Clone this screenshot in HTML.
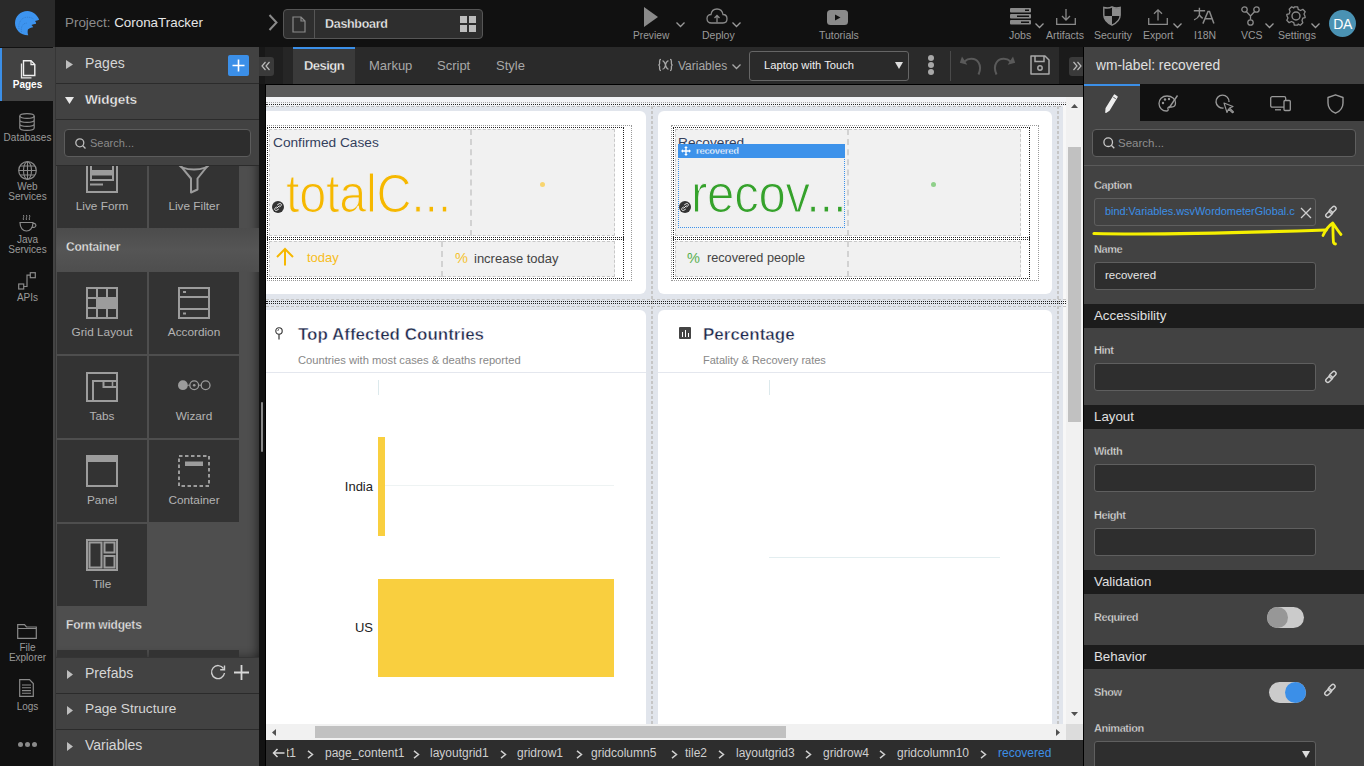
<!DOCTYPE html>
<html><head><meta charset="utf-8">
<style>
*{box-sizing:border-box;margin:0;padding:0}
html,body{width:1364px;height:766px;overflow:hidden;background:#111;font-family:"Liberation Sans",sans-serif}
.a{position:absolute}
.t{position:absolute;white-space:nowrap;line-height:1}
svg{position:absolute;overflow:visible}
</style></head><body>

<!-- ============ TOP BAR ============ -->
<div class="a" style="left:0;top:0;width:1364px;height:47px;background:#111"></div>
<div class="a" style="left:0;top:0;width:55px;height:47px;background:#2a2a2a"></div>
<!-- logo -->
<svg style="left:15px;top:10.7px" width="25" height="25" viewBox="0 0 25 25"><path d="M13.3 24.2 C6 24.5 0 19 0 12 C0 5.3 5.5 0 12.5 0 C17.8 0 22 3.5 24.2 8.7 C22.8 9.3 21.2 9.5 20 10 C20.8 10.8 21.2 11.7 21.1 12.7 C19.5 13 17.8 13.3 16.4 14 C17.2 14.6 17.8 15.3 18.2 16.2 C16.3 16.5 14.2 17.2 12.9 18.4 C12.5 20.5 12.5 22.5 13.3 24.2 Z" fill="#3d94ef"/><path d="M4 18 C3 12 6 6.5 12 6.2 C15 6.1 17.5 7 19 8.3 M6.5 21 C5.5 16 8 11.5 12.5 12.2" stroke="#2a6cb5" stroke-width="0.5" fill="none" stroke-dasharray="1 0.8"/></svg>
<div class="t" style="left:65px;top:16px;font-size:13.4px;color:#8c8c8c">Project: <span style="color:#e6e6e6">CoronaTracker</span></div>
<svg style="left:268px;top:14px" width="10" height="17" viewBox="0 0 10 17"><path d="M1.5 1 L8.5 8.5 L1.5 16" stroke="#8a8a8a" stroke-width="2" fill="none"/></svg>
<div class="a" style="left:283px;top:9px;width:200px;height:30px;background:#2e2e2e;border:1px solid #565656;border-radius:4px"></div>
<div class="a" style="left:314px;top:10px;width:1px;height:28px;background:#565656"></div>
<svg style="left:292px;top:16px" width="14" height="17" viewBox="0 0 14 17"><path d="M1 1 H9 L13 5 V16 H1 Z M9 1 V5 H13" stroke="#8a8a8a" stroke-width="1.2" fill="none"/></svg>
<div class="t" style="left:325px;top:18px;font-size:12.5px;font-weight:bold;color:#f4f4f4;letter-spacing:-0.3px;-webkit-text-stroke:0.3px #2e2e2e">Dashboard</div>
<div class="a" style="left:460px;top:16px;width:7px;height:7px;background:#bdbdbd"></div>
<div class="a" style="left:469px;top:16px;width:7px;height:7px;background:#bdbdbd"></div>
<div class="a" style="left:460px;top:25px;width:7px;height:7px;background:#bdbdbd"></div>
<div class="a" style="left:469px;top:25px;width:7px;height:7px;background:#bdbdbd"></div>

<!-- top toolbar icons -->
<svg style="left:643px;top:7px" width="16" height="20" viewBox="0 0 16 20"><path d="M1 0 L15 10 L1 20 Z" fill="#8a8a8a"/></svg>
<div class="t" style="left:633px;top:31px;font-size:10.2px;color:#9a9a9a">Preview</div>
<svg style="left:676px;top:22px" width="9" height="6" viewBox="0 0 9 6"><path d="M0.5 0.5 L4.5 4.5 L8.5 0.5" stroke="#9a9a9a" stroke-width="1.3" fill="none"/></svg>

<svg style="left:706px;top:8px" width="22" height="16" viewBox="0 0 22 16"><path d="M5.5 15 C2.5 15 1 13 1 10.5 C1 8 3 6.5 5 6.5 C5.5 3 8 1 11 1 C14.5 1 16.5 3.5 17 6.5 C19.5 6.5 21 8.5 21 10.8 C21 13 19.5 15 17 15 Z" stroke="#8a8a8a" stroke-width="1.3" fill="none"/><path d="M11 14.5 V7.5 M8.5 10 L11 7.5 L13.5 10" stroke="#8a8a8a" stroke-width="1.3" fill="none"/></svg>
<div class="t" style="left:702px;top:30px;font-size:10.5px;color:#9a9a9a">Deploy</div>
<svg style="left:732px;top:22px" width="9" height="6" viewBox="0 0 9 6"><path d="M0.5 0.5 L4.5 4.5 L8.5 0.5" stroke="#9a9a9a" stroke-width="1.3" fill="none"/></svg>

<svg style="left:827px;top:10px" width="21" height="15" viewBox="0 0 21 15"><rect x="0" y="0" width="21" height="15" rx="3.5" fill="#8a8a8a"/><path d="M8 4.5 L13.5 7.5 L8 10.5 Z" fill="#111"/></svg>
<div class="t" style="left:819px;top:30px;font-size:10.5px;color:#9a9a9a">Tutorials</div>

<svg style="left:1010px;top:8px" width="21" height="17" viewBox="0 0 21 17"><rect x="0" y="0" width="21" height="4.5" rx="1" fill="#8a8a8a"/><rect x="0" y="6" width="21" height="4.5" rx="1" fill="#8a8a8a"/><rect x="0" y="12" width="21" height="4.5" rx="1" fill="#8a8a8a"/><rect x="15" y="1.5" width="4" height="1.5" fill="#111"/><rect x="7" y="7.5" width="12" height="1.5" fill="#111"/><rect x="11" y="13.5" width="8" height="1.5" fill="#111"/></svg>
<div class="t" style="left:1009px;top:30px;font-size:10.5px;color:#9a9a9a">Jobs</div>
<svg style="left:1035px;top:23px" width="9" height="6" viewBox="0 0 9 6"><path d="M0.5 0.5 L4.5 4.5 L8.5 0.5" stroke="#9a9a9a" stroke-width="1.3" fill="none"/></svg>

<svg style="left:1056px;top:9px" width="20" height="16" viewBox="0 0 20 16"><path d="M0.7 9 V15.3 H19.3 V9" stroke="#8a8a8a" stroke-width="1.3" fill="none"/><path d="M10 0 V11 M6 7 L10 11 L14 7" stroke="#8a8a8a" stroke-width="1.3" fill="none"/></svg>
<div class="t" style="left:1046px;top:30px;font-size:10.5px;color:#9a9a9a">Artifacts</div>

<svg style="left:1103px;top:6px" width="18" height="20" viewBox="0 0 18 20"><path d="M9 0.8 C12 2.5 14.5 2.2 17.2 1.5 V9 C17.2 14 13.5 17 9 19.2 C4.5 17 0.8 14 0.8 9 V1.5 C3.5 2.2 6 2.5 9 0.8 Z" stroke="#8a8a8a" stroke-width="1.4" fill="#111"/><path d="M9 1 C12 2.5 14.5 2.5 17 2 V10 H9 Z M9 10 V19 C4.5 17 1 14 1 10 Z" fill="#8a8a8a"/></svg>
<div class="t" style="left:1094px;top:30px;font-size:10.5px;color:#9a9a9a">Security</div>

<svg style="left:1148px;top:9px" width="20" height="16" viewBox="0 0 20 16"><path d="M0.7 9 V15.3 H19.3 V9" stroke="#8a8a8a" stroke-width="1.3" fill="none"/><path d="M10 11.5 V0.8 M6 4.8 L10 0.8 L14 4.8" stroke="#8a8a8a" stroke-width="1.3" fill="none"/></svg>
<div class="t" style="left:1143px;top:30px;font-size:10.5px;color:#9a9a9a">Export</div>
<svg style="left:1173px;top:23px" width="9" height="6" viewBox="0 0 9 6"><path d="M0.5 0.5 L4.5 4.5 L8.5 0.5" stroke="#9a9a9a" stroke-width="1.3" fill="none"/></svg>

<svg style="left:1193px;top:7px" width="22" height="18" viewBox="0 0 22 18"><path d="M0.8 3.7 H12.1 M6.4 0.8 V8 C5.5 10 3.5 12 1.1 12.8 M6.4 8 C7.5 9.5 8.5 10.5 9.7 11.4" stroke="#8a8a8a" stroke-width="1.4" fill="none"/><path d="M9.9 16.6 L15 4.4 H16.5 L20.9 16.6 M12 11.7 H18.6" stroke="#8a8a8a" stroke-width="1.5" fill="none"/></svg>

<div class="t" style="left:1194px;top:30px;font-size:10.5px;color:#9a9a9a">I18N</div>

<svg style="left:1241px;top:6px" width="19" height="20" viewBox="0 0 19 20"><circle cx="3.5" cy="3.5" r="2.7" stroke="#8a8a8a" stroke-width="1.3" fill="none"/><circle cx="15.5" cy="3.5" r="2.7" stroke="#8a8a8a" stroke-width="1.3" fill="none"/><circle cx="9.5" cy="16.5" r="2.7" stroke="#8a8a8a" stroke-width="1.3" fill="none"/><path d="M5.3 5.5 L9.5 10 L13.7 5.5 M9.5 10 V13.8" stroke="#8a8a8a" stroke-width="1.3" fill="none"/></svg>
<div class="t" style="left:1241px;top:30px;font-size:10.5px;color:#9a9a9a">VCS</div>
<svg style="left:1265px;top:23px" width="9" height="6" viewBox="0 0 9 6"><path d="M0.5 0.5 L4.5 4.5 L8.5 0.5" stroke="#9a9a9a" stroke-width="1.3" fill="none"/></svg>

<svg style="left:1286px;top:6px" width="20" height="20" viewBox="0 0 20 20"><path d="M8.3 0.8 H11.7 L12.2 3.3 L14.5 4.5 L16.8 3.3 L19.2 5.7 L18 8 L18.9 10 L19.2 11.7 L16.8 12.2 L16 14.5 L16.8 16.8 L14.3 19.2 L12.2 18 L11.7 19.2 H8.3 L7.8 16.7 L5.5 15.5 L3.2 16.7 L0.8 14.3 L2 12 L1 10 L0.8 8.3 L3.2 7.8 L4 5.5 L3.2 3.2 L5.7 0.8 L7.8 2 Z" stroke="#8a8a8a" stroke-width="1.3" fill="none" stroke-linejoin="round"/><circle cx="10" cy="10" r="4" stroke="#8a8a8a" stroke-width="1.4" fill="none"/></svg>
<div class="t" style="left:1278px;top:30px;font-size:10.5px;color:#9a9a9a">Settings</div>
<svg style="left:1311px;top:23px" width="9" height="6" viewBox="0 0 9 6"><path d="M0.5 0.5 L4.5 4.5 L8.5 0.5" stroke="#9a9a9a" stroke-width="1.3" fill="none"/></svg>
<div class="a" style="left:1329px;top:10px;width:27px;height:27px;border-radius:50%;background:#4a92b3"></div>
<div class="t" style="left:1330px;top:17px;width:25px;text-align:center;font-size:14px;color:#fff;letter-spacing:-0.5px">DA</div>

<!-- ============ LEFT RAIL ============ -->
<div class="a" style="left:0;top:47px;width:53px;height:719px;background:#111"></div>
<div class="a" style="left:53px;top:47px;width:2px;height:719px;background:#444"></div><div class="a" style="left:55px;top:47px;width:1px;height:719px;background:#363636"></div>

<!-- active Pages -->
<div class="a" style="left:0;top:48px;width:55px;height:53px;background:#424242"></div>
<div class="a" style="left:0;top:48px;width:2px;height:53px;background:#3b8fe8"></div>
<svg style="left:19px;top:60px" width="17" height="19" viewBox="0 0 17 19"><path d="M2.5 3.5 V17.8 H12.5" stroke="#e8e8e8" stroke-width="1.3" fill="none"/><path d="M4.5 0.8 H12 L15.8 4.6 V15.5 H4.5 Z" stroke="#f0f0f0" stroke-width="1.4" fill="#424242"/><path d="M12 0.8 V4.6 H15.8" stroke="#f0f0f0" stroke-width="1.2" fill="none"/></svg>
<div class="t" style="left:0;top:80px;width:55px;text-align:center;font-size:10px;font-weight:bold;color:#fff">Pages</div>
<!-- Databases -->
<svg style="left:19px;top:113px" width="16" height="18" viewBox="0 0 16 18"><ellipse cx="8" cy="3" rx="7.2" ry="2.4" stroke="#8a8a8a" stroke-width="1.2" fill="none"/><path d="M0.8 3 V15 C0.8 16.5 4 17.4 8 17.4 C12 17.4 15.2 16.5 15.2 15 V3 M0.8 7 C0.8 8.5 4 9.4 8 9.4 C12 9.4 15.2 8.5 15.2 7 M0.8 11 C0.8 12.5 4 13.4 8 13.4 C12 13.4 15.2 12.5 15.2 11" stroke="#8a8a8a" stroke-width="1.2" fill="none"/></svg>
<div class="t" style="left:0;top:133px;width:55px;text-align:center;font-size:10px;color:#9a9a9a">Databases</div>
<!-- Web -->
<svg style="left:18px;top:161px" width="19" height="19" viewBox="0 0 19 19"><circle cx="9.5" cy="9.5" r="8.8" stroke="#8a8a8a" stroke-width="1.2" fill="none"/><ellipse cx="9.5" cy="9.5" rx="4" ry="8.8" stroke="#8a8a8a" stroke-width="1.1" fill="none"/><path d="M9.5 0.7 V18.3 M0.7 9.5 H18.3 M2 5 H17 M2 14 H17" stroke="#8a8a8a" stroke-width="1.1" fill="none"/></svg>
<div class="t" style="left:0;top:182px;width:55px;text-align:center;font-size:10px;color:#9a9a9a;line-height:10.3px;white-space:normal">Web<br>Services</div>
<!-- Java -->
<svg style="left:18px;top:214px" width="19" height="18" viewBox="0 0 19 18"><path d="M2 8.5 H15 C15 14 12 17 8.5 17 C5 17 2 14 2 8.5 Z" stroke="#8a8a8a" stroke-width="1.2" fill="none"/><path d="M15 9.5 C17.5 9 18.5 11 17.5 12.5 C16.7 13.5 15 13.5 14 13.2" stroke="#8a8a8a" stroke-width="1.2" fill="none"/><path d="M5.5 6 C4.5 4.5 6.5 3 5.5 1 M8.5 6 C7.5 4.5 9.5 3 8.5 1 M11.5 6 C10.5 4.5 12.5 3 11.5 1" stroke="#8a8a8a" stroke-width="1" fill="none"/></svg>
<div class="t" style="left:0;top:235px;width:55px;text-align:center;font-size:10px;color:#9a9a9a;line-height:10.3px;white-space:normal">Java<br>Services</div>
<!-- APIs -->
<svg style="left:18px;top:272px" width="18" height="18" viewBox="0 0 18 18"><rect x="0.7" y="12" width="5" height="5" stroke="#8a8a8a" stroke-width="1.2" fill="none"/><rect x="12.3" y="0.7" width="5" height="5" stroke="#8a8a8a" stroke-width="1.2" fill="none"/><path d="M5.7 14.5 H9 V3.2 H12.3" stroke="#8a8a8a" stroke-width="1.2" fill="none"/></svg>
<div class="t" style="left:0;top:293px;width:55px;text-align:center;font-size:10px;color:#9a9a9a">APIs</div>
<!-- File explorer -->
<svg style="left:17px;top:624px" width="20" height="15" viewBox="0 0 20 15"><path d="M0.7 0.7 H7.5 L9.5 3 H19.3 V14.3 H0.7 Z M0.7 4.5 H19.3" stroke="#8a8a8a" stroke-width="1.2" fill="none"/></svg>
<div class="t" style="left:0;top:643px;width:55px;text-align:center;font-size:10px;color:#9a9a9a;line-height:10.3px;white-space:normal">File<br>Explorer</div>
<!-- Logs -->
<svg style="left:19px;top:679px" width="15" height="18" viewBox="0 0 15 18"><path d="M0.7 0.7 H10.5 L14.3 4.5 V17.3 H0.7 Z" stroke="#8a8a8a" stroke-width="1.2" fill="none"/><path d="M3 6 H12 M3 8.8 H12 M3 11.6 H12 M3 14.2 H12" stroke="#8a8a8a" stroke-width="1.1" fill="none"/></svg>
<div class="t" style="left:0;top:702px;width:55px;text-align:center;font-size:10px;color:#9a9a9a">Logs</div>
<div class="a" style="left:18px;top:742px;width:5px;height:5px;border-radius:50%;background:#8a8a8a"></div>
<div class="a" style="left:25px;top:742px;width:5px;height:5px;border-radius:50%;background:#8a8a8a"></div>
<div class="a" style="left:32px;top:742px;width:5px;height:5px;border-radius:50%;background:#8a8a8a"></div>

<!-- ============ LEFT PANEL ============ -->
<div class="a" style="left:56px;top:47px;width:203px;height:719px;background:#424242"></div>
<div class="a" style="left:259px;top:47px;width:6px;height:719px;background:#121212"></div>
<div class="a" style="left:265px;top:84px;width:1px;height:682px;background:#000"></div>
<div class="a" style="left:261px;top:402px;width:2px;height:50px;background:#8a8a8a;border-radius:1px"></div>
<!-- Pages row -->
<div class="a" style="left:56px;top:83px;width:203px;height:1px;background:#2b2b2b"></div>
<svg style="left:66px;top:60px" width="7" height="9" viewBox="0 0 7 9"><path d="M0 0 L7 4.5 L0 9 Z" fill="#bdbdbd"/></svg>
<div class="t" style="left:85px;top:56px;font-size:14px;color:#d6d6d6">Pages</div>
<div class="a" style="left:228px;top:55px;width:21px;height:21px;background:#3b8fe8;border-radius:2px"></div>
<svg style="left:231px;top:58px" width="15" height="15" viewBox="0 0 15 15"><path d="M7.5 1.5 V13.5 M1.5 7.5 H13.5" stroke="#fff" stroke-width="1.6"/></svg>
<!-- Widgets row -->
<div class="a" style="left:56px;top:119px;width:203px;height:1px;background:#2b2b2b"></div>
<svg style="left:65px;top:97px" width="9" height="7" viewBox="0 0 9 7"><path d="M0 0 H9 L4.5 7 Z" fill="#e8e8e8"/></svg>
<div class="t" style="left:85px;top:92.5px;font-size:13.6px;font-weight:bold;color:#f4f4f4;letter-spacing:-0.1px;-webkit-text-stroke:0.35px #424242">Widgets</div>
<!-- search -->
<div class="a" style="left:64px;top:129px;width:187px;height:28px;background:#2d2d2d;border:1px solid #5c5c5c;border-radius:4px"></div>
<svg style="left:75px;top:138px" width="11" height="11" viewBox="0 0 11 11"><circle cx="4.8" cy="4.8" r="4" stroke="#bbb" stroke-width="1.3" fill="none"/><path d="M7.8 7.8 L10.5 10.5" stroke="#bbb" stroke-width="1.3"/></svg>
<div class="t" style="left:90px;top:138px;font-size:11px;color:#8a8a8a">Search...</div>
<div class="a" style="left:56px;top:165px;width:203px;height:1px;background:#2b2b2b"></div>
<!-- widgets scroll area -->
<div class="a" style="left:56px;top:166px;width:203px;height:491px;background:#4e4e4e;overflow:hidden">
  <div class="a" style="left:0;top:0;width:203px;height:491px;box-shadow:inset -10px 0 10px -8px rgba(0,0,0,.45), inset 0 -8px 8px -6px rgba(0,0,0,.3)"></div>
</div>
<div class="a" style="left:56px;top:166px;width:203px;height:491px;overflow:hidden">
<div class="a" style="left:1px;top:-20px;width:90px;height:82px;background:#333"></div>
<svg style="left:30px;top:-5px" width="32" height="32" viewBox="0 0 32 32"><rect x="1" y="1" width="30" height="30" stroke="#9c9c9c" stroke-width="2" fill="none"/><rect x="5" y="-6" width="22" height="25" stroke="#9c9c9c" stroke-width="2" fill="none"/><rect x="5" y="9" width="22" height="5.5" fill="#9c9c9c"/><path d="M4 23.5 H17" stroke="#9c9c9c" stroke-width="2"/></svg>
<div class="t" style="left:1px;top:35px;width:90px;text-align:center;font-size:11.8px;color:#b4b4b4">Live Form</div>
<div class="a" style="left:93px;top:-20px;width:90px;height:82px;background:#333"></div>
<svg style="left:122px;top:-5px" width="32" height="32" viewBox="0 0 32 32"><path d="M1 3 L13 17.5 V31.5 L19.5 28.5 V17.5 L31 3" stroke="#9c9c9c" stroke-width="2" fill="none" stroke-linejoin="round"/><ellipse cx="16" cy="3" rx="15" ry="5.5" stroke="#9c9c9c" stroke-width="2" fill="none"/></svg>
<div class="t" style="left:93px;top:35px;width:90px;text-align:center;font-size:11.8px;color:#b4b4b4">Live Filter</div>
<div class="a" style="left:0;top:62px;width:203px;height:44px;background:linear-gradient(180deg,#4c4c4c,#555 50%,#4e4e4e)"></div>
<div class="t" style="left:10px;top:75px;font-size:12px;font-weight:bold;color:#e6e6e6;letter-spacing:-0.2px;-webkit-text-stroke:0.3px #505050">Container</div>
<div class="a" style="left:1px;top:106px;width:90px;height:82px;background:#333"></div>
<svg style="left:30px;top:121px" width="32" height="32" viewBox="0 0 32 32"><rect x="1" y="1" width="30" height="30" stroke="#9c9c9c" stroke-width="2" fill="none"/><path d="M11 1 V31 M21 1 V31 M1 11 H31 M1 21 H31" stroke="#9c9c9c" stroke-width="2" fill="none"/><rect x="11" y="11" width="20" height="10" fill="#9c9c9c"/></svg>
<div class="t" style="left:1px;top:161px;width:90px;text-align:center;font-size:11.8px;color:#b4b4b4">Grid Layout</div>
<div class="a" style="left:93px;top:106px;width:90px;height:82px;background:#333"></div>
<svg style="left:122px;top:121px" width="32" height="32" viewBox="0 0 32 32"><rect x="1" y="1" width="30" height="30" stroke="#9c9c9c" stroke-width="2" fill="none"/><path d="M1 10 H31 M1 22 H31" stroke="#9c9c9c" stroke-width="2" fill="none"/><rect x="5" y="4" width="3" height="2" fill="#9c9c9c"/><rect x="5" y="25.5" width="3" height="2" fill="#9c9c9c"/></svg>
<div class="t" style="left:93px;top:161px;width:90px;text-align:center;font-size:11.8px;color:#b4b4b4">Accordion</div>
<div class="a" style="left:1px;top:190px;width:90px;height:82px;background:#333"></div>
<svg style="left:30px;top:205px" width="32" height="32" viewBox="0 0 32 32"><rect x="1" y="2" width="30" height="28" stroke="#9c9c9c" stroke-width="2" fill="none"/><path d="M7 30 V10 H31 M17.5 10 V16 H31" stroke="#9c9c9c" stroke-width="2" fill="none"/><path d="M26.5 10 V16" stroke="#9c9c9c" stroke-width="1.6"/></svg>
<div class="t" style="left:1px;top:245px;width:90px;text-align:center;font-size:11.8px;color:#b4b4b4">Tabs</div>
<div class="a" style="left:93px;top:190px;width:90px;height:82px;background:#333"></div>
<svg style="left:122px;top:205px" width="32" height="32" viewBox="0 0 32 32"><circle cx="4.9" cy="14.2" r="4.9" fill="#9c9c9c"/><circle cx="16.2" cy="14.2" r="4.4" stroke="#9c9c9c" stroke-width="1.3" fill="none"/><circle cx="16.2" cy="14.2" r="1.3" fill="#9c9c9c"/><circle cx="27.6" cy="14.2" r="4.4" stroke="#9c9c9c" stroke-width="1.3" fill="none"/><path d="M9.7 14.2 H11.8 M20.6 14.2 H23.2" stroke="#9c9c9c" stroke-width="1"/></svg>
<div class="t" style="left:93px;top:245px;width:90px;text-align:center;font-size:11.8px;color:#b4b4b4">Wizard</div>
<div class="a" style="left:1px;top:274px;width:90px;height:82px;background:#333"></div>
<svg style="left:30px;top:289px" width="32" height="32" viewBox="0 0 32 32"><rect x="1" y="1" width="30" height="30" stroke="#9c9c9c" stroke-width="2" fill="none"/><rect x="0" y="0" width="32" height="7" fill="#9c9c9c"/></svg>
<div class="t" style="left:1px;top:329px;width:90px;text-align:center;font-size:11.8px;color:#b4b4b4">Panel</div>
<div class="a" style="left:93px;top:274px;width:90px;height:82px;background:#333"></div>
<svg style="left:122px;top:289px" width="32" height="32" viewBox="0 0 32 32"><rect x="1" y="1" width="30" height="30" stroke="#9c9c9c" stroke-width="2" fill="none" stroke-dasharray="3.5 2.5"/><rect x="7" y="6.5" width="18" height="4.5" fill="#9c9c9c"/></svg>
<div class="t" style="left:93px;top:329px;width:90px;text-align:center;font-size:11.8px;color:#b4b4b4">Container</div>
<div class="a" style="left:1px;top:358px;width:90px;height:82px;background:#333"></div>
<svg style="left:30px;top:373px" width="32" height="32" viewBox="0 0 32 32"><rect x="1" y="1" width="30" height="30" stroke="#9c9c9c" stroke-width="2" fill="none"/><rect x="3.5" y="3.5" width="12" height="25" stroke="#9c9c9c" stroke-width="2" fill="none"/><rect x="18.5" y="3.5" width="10" height="10" stroke="#9c9c9c" stroke-width="2" fill="none"/><rect x="18.5" y="17" width="10" height="11.5" stroke="#9c9c9c" stroke-width="2" fill="none"/></svg>
<div class="t" style="left:1px;top:413px;width:90px;text-align:center;font-size:11.8px;color:#b4b4b4">Tile</div>
<div class="t" style="left:10px;top:453px;font-size:12px;font-weight:bold;color:#e6e6e6;letter-spacing:-0.2px;-webkit-text-stroke:0.3px #505050">Form widgets</div>
<div class="a" style="left:1px;top:484px;width:90px;height:10px;background:#333"></div><div class="a" style="left:93px;top:484px;width:90px;height:10px;background:#333"></div>
</div>

<!-- bottom rows -->
<div class="a" style="left:56px;top:657px;width:203px;height:109px;background:#424242;border-top:1px solid #353535"></div>
<div class="a" style="left:56px;top:693px;width:203px;height:1px;background:#2b2b2b"></div>
<div class="a" style="left:56px;top:729px;width:203px;height:1px;background:#2b2b2b"></div>
<svg style="left:67px;top:670px" width="6" height="9" viewBox="0 0 6 9"><path d="M0 0 L6 4.5 L0 9 Z" fill="#bdbdbd"/></svg>
<div class="t" style="left:85px;top:666px;font-size:14px;color:#d6d6d6">Prefabs</div>
<svg style="left:210px;top:665px" width="16" height="15" viewBox="0 0 16 15"><path d="M13.5 3.5 A6.5 6.5 0 1 0 14.5 8" stroke="#d0d0d0" stroke-width="1.4" fill="none"/><path d="M14.5 0.5 V4.8 H10.2" stroke="#d0d0d0" stroke-width="1.4" fill="none"/></svg>
<svg style="left:234px;top:665px" width="15" height="15" viewBox="0 0 15 15"><path d="M7.5 0 V15 M0 7.5 H15" stroke="#d8d8d8" stroke-width="1.8"/></svg>
<svg style="left:67px;top:706px" width="6" height="9" viewBox="0 0 6 9"><path d="M0 0 L6 4.5 L0 9 Z" fill="#bdbdbd"/></svg>
<div class="t" style="left:85px;top:702px;font-size:13.7px;color:#d6d6d6">Page Structure</div>
<svg style="left:67px;top:742px" width="6" height="9" viewBox="0 0 6 9"><path d="M0 0 L6 4.5 L0 9 Z" fill="#bdbdbd"/></svg>
<div class="t" style="left:85px;top:738px;font-size:14px;color:#d6d6d6">Variables</div>


<!-- ============ CANVAS TOOLBAR ============ -->
<div class="a" style="left:259px;top:47px;width:825px;height:37px;background:#2a2a2a"></div>
<div class="a" style="left:259px;top:47px;width:6px;height:37px;background:#181818"></div>
<div class="a" style="left:265px;top:47px;width:18px;height:37px;background:#1f1f1f"></div>
<div class="a" style="left:283px;top:47px;width:10px;height:37px;background:#262626"></div>
<div class="a" style="left:259px;top:57px;width:15px;height:19px;background:#3a3a3a;border-radius:0 3px 3px 0"></div>
<svg style="left:261px;top:61px" width="10" height="10" viewBox="0 0 10 10"><path d="M4.5 1 L1 5 L4.5 9 M8.5 1 L5 5 L8.5 9" stroke="#bbb" stroke-width="1.2" fill="none"/></svg>
<div class="a" style="left:293px;top:47px;width:62px;height:37px;background:#3a3a3a"></div>
<div class="a" style="left:293px;top:47px;width:62px;height:2px;background:#3b8fe8"></div>
<div class="t" style="left:304px;top:59px;font-size:13px;font-weight:bold;color:#f4f4f4;letter-spacing:-0.55px;-webkit-text-stroke:0.3px #3a3a3a">Design</div>
<div class="t" style="left:369px;top:59px;font-size:13px;color:#a8a8a8">Markup</div>
<div class="t" style="left:437px;top:59px;font-size:13px;color:#a8a8a8">Script</div>
<div class="t" style="left:496px;top:59px;font-size:13px;color:#a8a8a8">Style</div>
<svg style="left:658px;top:59px" width="15" height="12" viewBox="0 0 15 13" preserveAspectRatio="none"><path d="M3 0.5 C1.8 0.5 1.6 1.2 1.6 2.5 V4.8 C1.6 5.8 1.2 6.3 0.4 6.5 C1.2 6.7 1.6 7.2 1.6 8.2 V10.5 C1.6 11.8 1.8 12.5 3 12.5 M12 0.5 C13.2 0.5 13.4 1.2 13.4 2.5 V4.8 C13.4 5.8 13.8 6.3 14.6 6.5 C13.8 6.7 13.4 7.2 13.4 8.2 V10.5 C13.4 11.8 13.2 12.5 12 12.5" stroke="#a8a8a8" stroke-width="1.3" fill="none"/><path d="M4.5 2 C6 2 6.5 3 7.5 6.5 C8.5 10 9 11 10.5 11 M10.5 2 C9 2 8 4 7.5 6.5 C7 9 6 11 4.5 11" stroke="#a8a8a8" stroke-width="1.3" fill="none"/></svg>
<div class="t" style="left:678px;top:60px;font-size:12px;color:#a8a8a8">Variables</div>
<svg style="left:732px;top:64px" width="9" height="6" viewBox="0 0 9 6"><path d="M0.5 0.5 L4.5 4.5 L8.5 0.5" stroke="#a8a8a8" stroke-width="1.3" fill="none"/></svg>
<div class="a" style="left:749px;top:51px;width:160px;height:30px;background:#2a2a2a;border:1px solid #666;border-radius:3px"></div>
<div class="t" style="left:764px;top:60px;font-size:11.2px;color:#f0f0f0">Laptop with Touch</div>
<svg style="left:895px;top:62px" width="8" height="7" viewBox="0 0 8 7"><path d="M0 0 H8 L4 7 Z" fill="#ddd"/></svg>
<div class="a" style="left:928px;top:55px;width:6px;height:6px;border-radius:50%;background:#a8a8a8"></div>
<div class="a" style="left:928px;top:62px;width:6px;height:6px;border-radius:50%;background:#a8a8a8"></div>
<div class="a" style="left:928px;top:69px;width:6px;height:6px;border-radius:50%;background:#a8a8a8"></div>
<div class="a" style="left:950px;top:51px;width:1px;height:30px;background:#4a4a4a"></div>
<svg style="left:959px;top:56px" width="22" height="19" viewBox="0 0 22 19"><path d="M5.5 5.5 C9 2 16 1.5 19.5 6.5 C21.5 9.5 21.5 14 19.5 18.5" stroke="#5a5a5a" stroke-width="2" fill="none"/><path d="M0.8 6.8 L3 0.5 L8.3 8.8 Z" fill="#5a5a5a"/></svg>
<svg style="left:994px;top:56px" width="22" height="19" viewBox="0 0 22 19"><path d="M16.5 5.5 C13 2 6 1.5 2.5 6.5 C0.5 9.5 0.5 14 2.5 18.5" stroke="#5a5a5a" stroke-width="2" fill="none"/><path d="M21.2 6.8 L19 0.5 L13.7 8.8 Z" fill="#5a5a5a"/></svg>
<svg style="left:1030px;top:55px" width="20" height="20" viewBox="0 0 20 20"><path d="M1 1 H15 L19 5 V19 H1 Z" stroke="#a8a8a8" stroke-width="1.5" fill="none" stroke-linejoin="round"/><path d="M5 1 V6.5 H14 V1" stroke="#a8a8a8" stroke-width="1.5" fill="none"/><circle cx="10" cy="13" r="2.2" stroke="#a8a8a8" stroke-width="1.5" fill="none"/></svg>
<div class="a" style="left:1059px;top:47px;width:25px;height:37px;background:#1b1b1b"></div>
<div class="a" style="left:1069px;top:57px;width:15px;height:19px;background:#3a3a3a;border-radius:3px 0 0 3px"></div>
<svg style="left:1072px;top:61px" width="10" height="10" viewBox="0 0 10 10"><path d="M1.5 1 L5 5 L1.5 9 M5.5 1 L9 5 L5.5 9" stroke="#bbb" stroke-width="1.2" fill="none"/></svg>
<div class="a" style="left:266px;top:84px;width:818px;height:1px;background:#000"></div>


<!-- ============ CANVAS ============ -->
<div class="a" style="left:266px;top:85px;width:817px;height:655px;overflow:hidden;background:#f3f4f7">
 <div class="a" style="left:0;top:0;width:817px;height:12px;background:#5a5a5a"></div>
 <!-- layout grid columns bg -->
 <div class="a" style="left:0;top:21px;width:797px;height:640px;background:#e1e5ec"></div>
 <div class="a" style="left:0;top:17px;width:800px;height:0;border-top:1px dotted #aaa"></div>
 <div class="a" style="left:0;top:19px;width:800px;height:0;border-top:1px dotted #222"></div>
 <div class="a" style="left:0;top:21px;width:800px;height:0;border-top:1px dashed #bbb"></div>
 <div class="a" style="left:797px;top:21px;width:3px;height:640px;background:#f7f7f7"></div>
 <!-- column dashed lines -->
 <div class="a" style="left:385px;top:21px;width:2px;height:640px;background:repeating-linear-gradient(180deg,#c6c6c6 0 3px,transparent 3px 5px)"></div>
 <div class="a" style="left:791px;top:21px;width:2px;height:640px;background:repeating-linear-gradient(180deg,#c6c6c6 0 3px,transparent 3px 5px)"></div>

 <!-- row separator -->
 <div class="a" style="left:0;top:214px;width:800px;height:0;border-top:1px dashed #c4c4c4"></div>
 <div class="a" style="left:0;top:216px;width:800px;height:0;border-top:1px dotted #222"></div>
 <div class="a" style="left:0;top:218px;width:800px;height:0;border-top:1px dotted #222"></div>
 <div class="a" style="left:0;top:221px;width:800px;height:0;border-top:1px dashed #c4c4c4"></div>
 <!-- CARD 1 -->
 <div class="a" style="left:-10px;top:26px;width:390px;height:183px;background:#fff;border-radius:6px"></div>
 <div class="a" style="left:-10px;top:40px;width:376px;height:156px;border:1px dotted #999"></div>
 <div class="a" style="left:1px;top:42px;width:357px;height:152px;border:1px dotted #222"></div>
 <div class="a" style="left:1px;top:152px;width:357px;height:0;border-top:1px dotted #222"></div><div class="a" style="left:1px;top:154px;width:357px;height:0;border-top:1px dotted #222"></div>
 <div class="a" style="left:3px;top:44px;width:346px;height:107px;background:#f1f1f1;border:1px dashed #c8c8c8"></div>
 <div class="a" style="left:204px;top:44px;width:0;height:107px;border-left:2px dashed #d2d2d2"></div>
 <div class="a" style="left:3px;top:156px;width:346px;height:36px;background:#f1f1f1;border:1px dashed #c8c8c8"></div>
 <div class="a" style="left:175px;top:156px;width:0;height:36px;border-left:2px dashed #d2d2d2"></div>
 <div class="t" style="left:7px;top:51px;font-size:13.7px;color:#34405c">Confirmed Cases</div>
 <div class="t" style="left:19.7px;top:80.5px;font-size:54px;color:#f6b800;transform:scaleX(0.9);transform-origin:0 0;letter-spacing:-0.3px;-webkit-text-stroke:1.2px #f1f1f1;paint-order:normal">totalC...</div>
 <div class="a" style="left:6px;top:116px;width:12px;height:12px;border-radius:50%;background:#333"></div>
 <svg style="left:8px;top:118px" width="8" height="8" viewBox="0 0 8 8"><path d="M3.2 2 L5 0.8 C5.8 0.3 6.8 0.5 7.2 1.2 C7.6 1.9 7.3 2.7 6.7 3.1 L5.2 4.1 M4.8 6 L3 7.2 C2.2 7.7 1.2 7.5 0.8 6.8 C0.4 6.1 0.7 5.3 1.3 4.9 L2.8 3.9 M2.5 5.5 L5.5 2.5" stroke="#fff" stroke-width="0.9" fill="none"/></svg>
 <div class="a" style="left:274px;top:97px;width:5px;height:5px;border-radius:50%;background:#f8d570"></div>
 <svg style="left:10px;top:163px" width="18" height="18" viewBox="0 0 18 18"><path d="M9 17.5 V1.5 M1 9 L9 1 L17 9" stroke="#f6b800" stroke-width="2" fill="none"/></svg>
 <div class="t" style="left:41px;top:166px;font-size:13px;color:#f7bd1c">today</div>
 <div class="t" style="left:189px;top:165.5px;font-size:14.5px;color:#f6b800;-webkit-text-stroke:0.15px #f1f1f1">%</div>
 <div class="t" style="left:208px;top:167px;font-size:13px;color:#444">increase today</div>

 <!-- CARD 2 -->
 <div class="a" style="left:392px;top:26px;width:394px;height:183px;background:#fff;border-radius:6px"></div>
 <div class="a" style="left:405px;top:40px;width:368px;height:156px;border:1px dotted #999"></div>
 <div class="a" style="left:407px;top:42px;width:357px;height:152px;border:1px dotted #222"></div>
 <div class="a" style="left:407px;top:152px;width:357px;height:0;border-top:1px dotted #222"></div><div class="a" style="left:407px;top:154px;width:357px;height:0;border-top:1px dotted #222"></div>
 <div class="a" style="left:409px;top:44px;width:346px;height:107px;background:#f1f1f1;border:1px dashed #c8c8c8"></div>
 <div class="a" style="left:581px;top:44px;width:0;height:107px;border-left:2px dashed #d2d2d2"></div>
 <div class="a" style="left:409px;top:156px;width:346px;height:36px;background:#f1f1f1;border:1px dashed #c8c8c8"></div>
 <div class="a" style="left:581px;top:156px;width:0;height:36px;border-left:2px dashed #d2d2d2"></div>
 <div class="a" style="left:409px;top:45px;width:200px;height:14px;overflow:hidden"><div class="t" style="left:3px;top:6px;font-size:13.7px;color:#34405c">Recovered</div></div>
 <div class="t" style="left:425px;top:80.5px;font-size:54px;color:#35a22b;transform:scaleX(0.91);transform-origin:0 0;letter-spacing:-0.3px;-webkit-text-stroke:1.2px #f1f1f1">recov...</div>
 <div class="a" style="left:412px;top:59px;width:167px;height:84px;border:1px dotted #3d92ea"></div>
 <div class="a" style="left:412px;top:59px;width:167px;height:14px;background:#3d92ea"></div>
 <svg style="left:415px;top:61px" width="10" height="10" viewBox="0 0 10 10"><path d="M5 0 L6.8 2 H5.7 V4.3 H8 V3.2 L10 5 L8 6.8 V5.7 H5.7 V8 H6.8 L5 10 L3.2 8 H4.3 V5.7 H2 V6.8 L0 5 L2 3.2 V4.3 H4.3 V2 H3.2 Z" fill="#fff"/></svg>
 <div class="t" style="left:430px;top:61px;font-size:9.5px;font-weight:bold;color:#fff;letter-spacing:-0.3px;-webkit-text-stroke:0.3px #3d92ea">recovered</div>
 <div class="a" style="left:412.5px;top:116px;width:12px;height:12px;border-radius:50%;background:#333"></div>
 <svg style="left:414.5px;top:118px" width="8" height="8" viewBox="0 0 8 8"><path d="M3.2 2 L5 0.8 C5.8 0.3 6.8 0.5 7.2 1.2 C7.6 1.9 7.3 2.7 6.7 3.1 L5.2 4.1 M4.8 6 L3 7.2 C2.2 7.7 1.2 7.5 0.8 6.8 C0.4 6.1 0.7 5.3 1.3 4.9 L2.8 3.9 M2.5 5.5 L5.5 2.5" stroke="#fff" stroke-width="0.9" fill="none"/></svg>
 <div class="a" style="left:665px;top:97px;width:5px;height:5px;border-radius:50%;background:#8fd08a"></div>
 <div class="t" style="left:421px;top:165.5px;font-size:14.5px;color:#35a22b;-webkit-text-stroke:0.15px #f1f1f1">%</div>
 <div class="t" style="left:441px;top:167px;font-size:12.7px;color:#444">recovered people</div>

 <!-- CARD 3 -->
 <div class="a" style="left:-10px;top:225px;width:390px;height:460px;background:#fff;border-radius:6px"></div>
 <svg style="left:9px;top:242px" width="8" height="13" viewBox="0 0 8 13"><circle cx="4" cy="4" r="3.2" stroke="#333" stroke-width="1.1" fill="none"/><path d="M4 7.2 V12.5" stroke="#333" stroke-width="1.2"/><path d="M2.8 3.8 A1.3 1.3 0 0 1 4 2.5" stroke="#333" stroke-width="0.9" fill="none"/></svg>
 <div class="t" style="left:32px;top:241px;font-size:17px;font-weight:bold;color:#1f2a4d;letter-spacing:0px;-webkit-text-stroke:0.45px #fff">Top Affected Countries</div>
 <div class="t" style="left:32px;top:270px;font-size:11.2px;color:#888">Countries with most cases &amp; deaths reported</div>
 <div class="a" style="left:-10px;top:287px;width:390px;height:1px;background:#e4e7ee"></div>
 <div class="a" style="left:112px;top:295px;width:1px;height:15px;background:#dce9ec"></div>
 <div class="a" style="left:119px;top:400px;width:229px;height:1px;background:#eef3f3"></div>
 <div class="a" style="left:112px;top:352px;width:7px;height:99px;background:#f9cf3f"></div>
 <div class="t" style="left:47px;top:395px;width:60px;text-align:right;font-size:13px;color:#222">India</div>
 <div class="a" style="left:112px;top:494px;width:236px;height:98px;background:#f9cf3f"></div>
 <div class="t" style="left:47px;top:536px;width:60px;text-align:right;font-size:13px;color:#222">US</div>

 <!-- CARD 4 -->
 <div class="a" style="left:392px;top:225px;width:394px;height:460px;background:#fff;border-radius:6px"></div>
 <div class="a" style="left:413px;top:242px;width:12px;height:12px;background:#444;border-radius:1px"></div>
 <div class="a" style="left:415.5px;top:247px;width:1.5px;height:5px;background:#fff"></div>
 <div class="a" style="left:418.5px;top:245px;width:1.5px;height:7px;background:#fff"></div>
 <div class="a" style="left:421.5px;top:248px;width:1.5px;height:4px;background:#fff"></div>
 <div class="t" style="left:437px;top:241px;font-size:17px;font-weight:bold;color:#1f2a4d;letter-spacing:0px;-webkit-text-stroke:0.45px #fff">Percentage</div>
 <div class="t" style="left:437px;top:270px;font-size:11px;color:#888">Fatality &amp; Recovery rates</div>
 <div class="a" style="left:392px;top:287px;width:394px;height:1px;background:#e4e7ee"></div>
 <div class="a" style="left:503px;top:295px;width:1px;height:15px;background:#dce9ec"></div>
 <div class="a" style="left:503px;top:472px;width:231px;height:1px;background:#e3eef0"></div>

 <!-- scrollbars -->
 <div class="a" style="left:800px;top:12px;width:17px;height:627px;background:#f1f1f1"></div>
 <svg style="left:805px;top:19px" width="7" height="4" viewBox="0 0 7 4"><path d="M0 4 L3.5 0 L7 4 Z" fill="#505050"/></svg>
 <div class="a" style="left:802px;top:62px;width:13px;height:275px;background:#c1c1c1"></div>
 <svg style="left:805px;top:627px" width="7" height="4" viewBox="0 0 7 4"><path d="M0 0 L3.5 4 L7 0 Z" fill="#505050"/></svg>
 <div class="a" style="left:0;top:639px;width:800px;height:16px;background:#f1f1f1"></div>
 <svg style="left:6px;top:644px" width="4" height="7" viewBox="0 0 4 7"><path d="M4 0 L0 3.5 L4 7 Z" fill="#505050"/></svg>
 <div class="a" style="left:49px;top:641px;width:471px;height:12px;background:#c1c1c1"></div>
 <svg style="left:790px;top:644px" width="4" height="7" viewBox="0 0 4 7"><path d="M0 0 L4 3.5 L0 7 Z" fill="#505050"/></svg>
 <div class="a" style="left:800px;top:639px;width:17px;height:16px;background:#dcdcdc"></div>
</div>
<div class="a" style="left:1083px;top:47px;width:1px;height:719px;background:#000"></div>

<!-- breadcrumb -->
<div class="a" style="left:266px;top:740px;width:817px;height:26px;background:#2d2d2d"></div>
<svg style="left:272px;top:748px" width="13" height="10" viewBox="0 0 13 10"><path d="M12.5 5 H1.5 M5.5 1 L1.5 5 L5.5 9" stroke="#d8d8d8" stroke-width="1.5" fill="none"/></svg>
<div class="a" style="left:287px;top:744px;width:9px;height:18px;overflow:hidden"><div class="t" style="right:0;top:3px;font-size:12px;color:#cfcfcf">t1</div></div>
<svg style="left:307px;top:750px" width="7" height="9" viewBox="0 0 7 9"><path d="M1 0.8 L5.5 4.5 L1 8.2" stroke="#cfcfcf" stroke-width="1.5" fill="none"/></svg>
<svg style="left:413px;top:750px" width="7" height="9" viewBox="0 0 7 9"><path d="M1 0.8 L5.5 4.5 L1 8.2" stroke="#cfcfcf" stroke-width="1.5" fill="none"/></svg>
<svg style="left:500px;top:750px" width="7" height="9" viewBox="0 0 7 9"><path d="M1 0.8 L5.5 4.5 L1 8.2" stroke="#cfcfcf" stroke-width="1.5" fill="none"/></svg>
<svg style="left:576px;top:750px" width="7" height="9" viewBox="0 0 7 9"><path d="M1 0.8 L5.5 4.5 L1 8.2" stroke="#cfcfcf" stroke-width="1.5" fill="none"/></svg>
<svg style="left:671px;top:750px" width="7" height="9" viewBox="0 0 7 9"><path d="M1 0.8 L5.5 4.5 L1 8.2" stroke="#cfcfcf" stroke-width="1.5" fill="none"/></svg>
<svg style="left:718px;top:750px" width="7" height="9" viewBox="0 0 7 9"><path d="M1 0.8 L5.5 4.5 L1 8.2" stroke="#cfcfcf" stroke-width="1.5" fill="none"/></svg>
<svg style="left:805px;top:750px" width="7" height="9" viewBox="0 0 7 9"><path d="M1 0.8 L5.5 4.5 L1 8.2" stroke="#cfcfcf" stroke-width="1.5" fill="none"/></svg>
<svg style="left:879px;top:750px" width="7" height="9" viewBox="0 0 7 9"><path d="M1 0.8 L5.5 4.5 L1 8.2" stroke="#cfcfcf" stroke-width="1.5" fill="none"/></svg>
<svg style="left:980px;top:750px" width="7" height="9" viewBox="0 0 7 9"><path d="M1 0.8 L5.5 4.5 L1 8.2" stroke="#cfcfcf" stroke-width="1.5" fill="none"/></svg>
<div class="t" style="left:325px;top:747px;font-size:12px;color:#cfcfcf">page_content1</div>
<div class="t" style="left:430px;top:747px;font-size:12px;color:#cfcfcf">layoutgrid1</div>
<div class="t" style="left:517px;top:747px;font-size:12px;color:#cfcfcf">gridrow1</div>
<div class="t" style="left:591px;top:747px;font-size:12px;color:#cfcfcf">gridcolumn5</div>
<div class="t" style="left:685px;top:747px;font-size:12px;color:#cfcfcf">tile2</div>
<div class="t" style="left:736px;top:747px;font-size:12px;color:#cfcfcf">layoutgrid3</div>
<div class="t" style="left:823px;top:747px;font-size:12px;color:#cfcfcf">gridrow4</div>
<div class="t" style="left:897px;top:747px;font-size:12px;color:#cfcfcf">gridcolumn10</div>
<div class="t" style="left:998px;top:747px;font-size:12px;color:#3d8fe6">recovered</div>

<!-- ============ RIGHT PANEL ============ -->
<div class="a" style="left:1084px;top:47px;width:280px;height:719px;background:#424242"></div>
<div class="t" style="left:1096px;top:59px;font-size:13.8px;color:#e0e0e0">wm-label: recovered</div>
<div class="a" style="left:1084px;top:84px;width:280px;height:37px;background:#111"></div>
<div class="a" style="left:1084px;top:84px;width:56px;height:37px;background:#424242"></div>
<div class="a" style="left:1084px;top:84px;width:56px;height:2px;background:#3b8fe8"></div>
<svg style="left:1105px;top:94px" width="13" height="19" viewBox="0 0 13 19"><path d="M9.5 1.2 L12 2.8 L4 16 L1 18.2 L1.3 14.5 Z" stroke="#eee" stroke-width="1.6" fill="#eee" stroke-linejoin="round"/><path d="M8.3 3.2 L10.8 4.8" stroke="#444" stroke-width="0.9"/></svg>
<svg style="left:1158px;top:95px" width="20" height="17" viewBox="0 0 20 17"><path d="M9 1 C4 1 1 4.5 1 8.5 C1 13 4.5 16 8.5 16 C10 16 10.5 15 10 14 C9.5 13 10 12 11.5 12 H13.5 C16 12 17.5 10.5 17.5 8 C17.5 4 14 1 9 1 Z" stroke="#999" stroke-width="1.3" fill="none"/><circle cx="5" cy="8" r="1.2" fill="#999"/><circle cx="7" cy="4.5" r="1.2" fill="#999"/><circle cx="11" cy="4" r="1.2" fill="#999"/><path d="M19.5 0.5 L11 13" stroke="#999" stroke-width="1.4"/></svg>
<svg style="left:1215px;top:94px" width="19" height="19" viewBox="0 0 19 19"><path d="M8.5 14 A6.5 6.5 0 1 1 14 8" stroke="#999" stroke-width="1.4" fill="none"/><path d="M9 9 L18 12.5 L14.5 14 L18.5 18 L17.5 18.8 L13.5 15 L12 18.5 Z" stroke="#999" stroke-width="1.1" fill="#111" stroke-linejoin="round"/></svg>
<svg style="left:1270px;top:96px" width="21" height="15" viewBox="0 0 21 15"><rect x="0.7" y="0.7" width="15" height="10.5" rx="1.5" stroke="#999" stroke-width="1.3" fill="none"/><path d="M5 13.8 H11" stroke="#999" stroke-width="1.3"/><rect x="14" y="4.5" width="6.3" height="10" rx="1" stroke="#999" stroke-width="1.3" fill="#111"/></svg>
<svg style="left:1327px;top:94px" width="17" height="20" viewBox="0 0 17 20"><path d="M8.5 0.8 L16 3.5 V9 C16 14 12.5 17.5 8.5 19.2 C4.5 17.5 1 14 1 9 V3.5 Z" stroke="#999" stroke-width="1.4" fill="none" stroke-linejoin="round"/></svg>

<div class="a" style="left:1092px;top:129px;width:264px;height:28px;background:#2e2e2e;border:1px solid #5f5f5f;border-radius:4px"></div>
<svg style="left:1103px;top:137px" width="12" height="12" viewBox="0 0 12 12"><circle cx="5.2" cy="5.2" r="4.3" stroke="#c8c8c8" stroke-width="1.3" fill="none"/><path d="M8.3 8.3 L11.3 11.3" stroke="#c8c8c8" stroke-width="1.3"/></svg>
<div class="t" style="left:1118px;top:138px;font-size:11.5px;color:#8e8e8e">Search...</div>
<div class="a" style="left:1084px;top:165px;width:280px;height:1px;background:#5a5a5a"></div>

<div class="t" style="left:1094px;top:180px;font-size:11px;font-weight:bold;color:#dadada;letter-spacing:-0.45px;-webkit-text-stroke:0.3px #424242">Caption</div>
<div class="a" style="left:1094px;top:198px;width:222px;height:28px;background:#424242;border:1px solid #5f5f5f;border-radius:3px"></div>
<div class="a" style="left:1105px;top:203px;width:190px;height:18px;overflow:hidden"><div class="t" style="left:0;top:3px;font-size:10.9px;color:#3b8fe6">bind:Variables.wsvWordometerGlobal.cases</div></div>
<svg style="left:1300px;top:207px" width="12" height="12" viewBox="0 0 12 12"><path d="M1 1 L11 11 M11 1 L1 11" stroke="#d0d0d0" stroke-width="1.3"/></svg>
<svg style="left:1324px;top:205px" width="14" height="14" viewBox="-1.9 -1.9 17.8 17.8"><g transform="rotate(-45 7 7)"><rect x="-1.5" y="4.6" width="9.8" height="5.2" rx="2.6" stroke="#cfcfcf" stroke-width="1.8" fill="none"/><rect x="5.7" y="3.9" width="9.8" height="5.2" rx="2.6" stroke="#cfcfcf" stroke-width="1.8" fill="none"/></g></svg>

<svg style="left:1090px;top:218px" width="260" height="30" viewBox="0 0 260 30"><path d="M4 15.5 C60 17 130 15.5 236 12" stroke="#f5f000" stroke-width="3.2" fill="none" stroke-linecap="round"/><path d="M233 17.5 C235 13 238.5 8 242.8 5 C245 8 248 13 251 16.5 M242.8 6 C243 12 243 20 243.5 24.5 C244 25.5 245 26 245.5 26" stroke="#f5f000" stroke-width="2.8" fill="none" stroke-linecap="round" stroke-linejoin="round"/></svg>

<div class="t" style="left:1094px;top:244px;font-size:11px;font-weight:bold;color:#dadada;letter-spacing:-0.45px;-webkit-text-stroke:0.3px #424242">Name</div>
<div class="a" style="left:1094px;top:262px;width:222px;height:28px;background:#2e2e2e;border:1px solid #5f5f5f;border-radius:3px"></div>
<div class="t" style="left:1105px;top:270px;font-size:11.5px;color:#e6e6e6">recovered</div>

<div class="a" style="left:1084px;top:304px;width:280px;height:24px;background:#1c1c1c"></div>
<div class="t" style="left:1094px;top:308.5px;font-size:13.3px;color:#e0e0e0">Accessibility</div>
<div class="t" style="left:1094px;top:345px;font-size:11px;font-weight:bold;color:#dadada;letter-spacing:-0.45px;-webkit-text-stroke:0.3px #424242">Hint</div>
<div class="a" style="left:1094px;top:363px;width:222px;height:28px;background:#2e2e2e;border:1px solid #5f5f5f;border-radius:3px"></div>
<svg style="left:1324px;top:370px" width="14" height="14" viewBox="-1.9 -1.9 17.8 17.8"><g transform="rotate(-45 7 7)"><rect x="-1.5" y="4.6" width="9.8" height="5.2" rx="2.6" stroke="#cfcfcf" stroke-width="1.8" fill="none"/><rect x="5.7" y="3.9" width="9.8" height="5.2" rx="2.6" stroke="#cfcfcf" stroke-width="1.8" fill="none"/></g></svg>

<div class="a" style="left:1084px;top:405px;width:280px;height:24px;background:#1c1c1c"></div>
<div class="t" style="left:1094px;top:409.5px;font-size:13.3px;color:#e0e0e0">Layout</div>
<div class="t" style="left:1094px;top:446px;font-size:11px;font-weight:bold;color:#dadada;letter-spacing:-0.45px;-webkit-text-stroke:0.3px #424242">Width</div>
<div class="a" style="left:1094px;top:464px;width:222px;height:28px;background:#2e2e2e;border:1px solid #5f5f5f;border-radius:3px"></div>
<div class="t" style="left:1094px;top:510px;font-size:11px;font-weight:bold;color:#dadada;letter-spacing:-0.45px;-webkit-text-stroke:0.3px #424242">Height</div>
<div class="a" style="left:1094px;top:528px;width:222px;height:28px;background:#2e2e2e;border:1px solid #5f5f5f;border-radius:3px"></div>

<div class="a" style="left:1084px;top:570px;width:280px;height:24px;background:#1c1c1c"></div>
<div class="t" style="left:1094px;top:574.5px;font-size:13.3px;color:#e0e0e0">Validation</div>
<div class="t" style="left:1094px;top:612px;font-size:11px;font-weight:bold;color:#dadada;letter-spacing:-0.45px;-webkit-text-stroke:0.3px #424242">Required</div>
<div class="a" style="left:1267px;top:607px;width:37px;height:21px;border-radius:11px;background:#cbcbcb"></div>
<div class="a" style="left:1267px;top:607px;width:21px;height:21px;border-radius:50%;background:#979797"></div>

<div class="a" style="left:1084px;top:645px;width:280px;height:24px;background:#1c1c1c"></div>
<div class="t" style="left:1094px;top:649.5px;font-size:13.3px;color:#e0e0e0">Behavior</div>
<div class="t" style="left:1094px;top:687px;font-size:11px;font-weight:bold;color:#dadada;letter-spacing:-0.45px;-webkit-text-stroke:0.3px #424242">Show</div>
<div class="a" style="left:1269px;top:682px;width:37px;height:21px;border-radius:11px;background:#cbcbcb"></div>
<div class="a" style="left:1285px;top:682px;width:21px;height:21px;border-radius:50%;background:#3b8fe8"></div>
<svg style="left:1323px;top:683px" width="14" height="14" viewBox="-1.9 -1.9 17.8 17.8"><g transform="rotate(-45 7 7)"><rect x="-1.5" y="4.6" width="9.8" height="5.2" rx="2.6" stroke="#cfcfcf" stroke-width="1.8" fill="none"/><rect x="5.7" y="3.9" width="9.8" height="5.2" rx="2.6" stroke="#cfcfcf" stroke-width="1.8" fill="none"/></g></svg>
<div class="t" style="left:1094px;top:723px;font-size:11px;font-weight:bold;color:#dadada;letter-spacing:-0.45px;-webkit-text-stroke:0.3px #424242">Animation</div>
<div class="a" style="left:1094px;top:741px;width:222px;height:30px;background:#2e2e2e;border:1px solid #5f5f5f;border-radius:3px"></div>
<svg style="left:1302px;top:751px" width="8" height="7" viewBox="0 0 8 7"><path d="M0 0 H8 L4 7 Z" fill="#ddd"/></svg>
</body></html>
